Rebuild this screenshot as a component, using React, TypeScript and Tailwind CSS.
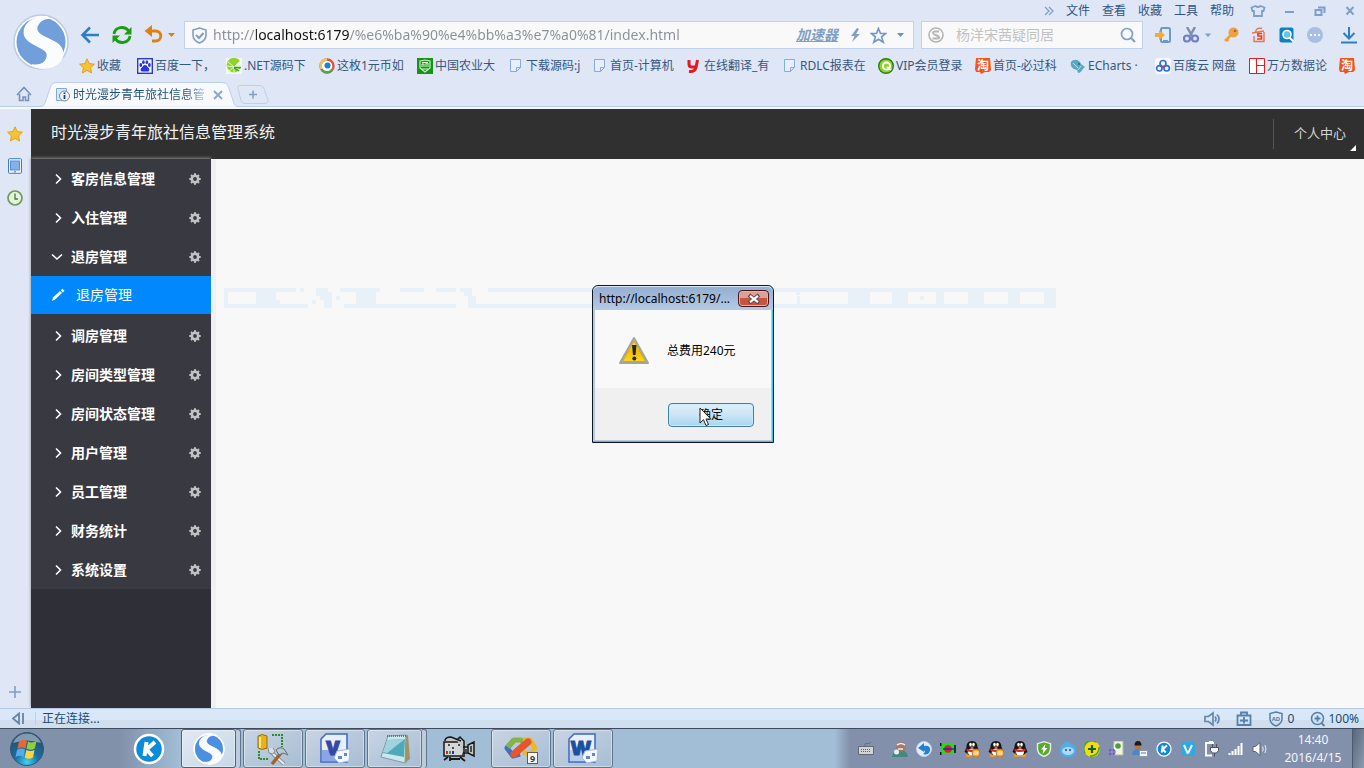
import type { ReactNode } from 'react';

const FONT = "font-['Noto_Sans','Noto_Sans_CJK_SC',sans-serif]";

const Svg = ({ size = 16, box = 16, className = '', children }: { size?: number; box?: number; className?: string; children: ReactNode }) => (
    <svg width={size} height={size} viewBox={`0 0 ${box} ${box}`} fill="none" aria-hidden="true" className={`shrink-0 ${className}`}>
        {children}
    </svg>
);

const SogouLogo = ({ size, blue = '#4a8fe2', rim = '#ffffff' }: { size: number; blue?: string; rim?: string }) => (
    <Svg size={size} box={56}>
        <circle cx="28" cy="28" r="27" fill="#fbfcfe" stroke={rim} strokeWidth="1.5" />
        <circle cx="28" cy="28" r="24.5" fill={blue} />
        <path d="M34 3C14 2 5 18 16 27C25 34 37 35 34 44C32 50 26 52 19 51L27 54C48 56 57 38 43 29C34 23 21 21 24 12C26 7 29 5 35 4Z" fill="#fbfcfe" stroke="#fbfcfe" strokeWidth="1.5" />
    </Svg>
);

const StarIcon = () => (
    <Svg>
        <path d="M8 .8l2.2 4.8 5.2.6-3.8 3.6 1 5.2L8 12.4 3.4 15l1-5.2L.6 6.2l5.2-.6z" fill="#f6c431" stroke="#e0a020" />
    </Svg>
);

const PageIcon = () => (
    <Svg>
        <path d="M2.500 1.500h10v8l-4 4h-6zM12.500 9.500h-4v4" fill="#e6effb" stroke="#82ade4" />
    </Svg>
);

const TaobaoIcon = () => (
    <Svg>
        <path d="M1 0h14l1 12-2 2h-4l-4 2-1-2H1L0 11z" fill="#f4531e" />
        <text x="8" y="11.500" fontSize="12" fontWeight="700" textAnchor="middle" fill="#fff">淘</text>
    </Svg>
);

const BaiduIcon = () => (
    <Svg>
        <rect x=".7" y=".7" width="14.600" height="14.600" fill="#f4f6ff" stroke="#2a35dc" strokeWidth="1.400" />
        <g fill="#2a35dc">
            <ellipse cx="3.800" cy="7" rx="1.400" ry="1.900" />
            <ellipse cx="6.400" cy="4.200" rx="1.300" ry="1.900" />
            <ellipse cx="9.800" cy="4.200" rx="1.300" ry="1.900" />
            <ellipse cx="12.400" cy="7" rx="1.400" ry="1.900" />
            <path d="M8 7c2 0 2 1.600 3.600 3 1.400 1.400.8 3.600-1 3.600H5.400c-1.800 0-2.400-2.200-1-3.600C6 8.600 6 7 8 7z" />
        </g>
    </Svg>
);

const NetIcon = () => (
    <Svg>
        <rect width="16" height="16" fill="#f4f8f2" />
        <path d="M14 3A7.300 7.300 0 1 0 15 9l-6 0z" fill="#8fd42c" />
        <path d="M2 4l6 5 6-6M1 8l7 1 7-2M3 13l5-4 6 3M8 9v6" stroke="#e4f6c8" />
        <path d="M8 9.500h7M8 10l5 3" stroke="#3f9c20" strokeWidth="1.400" />
    </Svg>
);

const RingIcon = () => (
    <Svg>
        <circle cx="8" cy="8" r="6.500" fill="#fff" stroke="#e8523c" strokeWidth="2.400" />
        <path d="M8 1.500A6.500 6.500 0 0 0 2.400 11" stroke="#e8c46a" strokeWidth="2.400" />
        <path d="M3 12a6.500 6.500 0 0 0 10 0" stroke="#45aa55" strokeWidth="2.400" />
        <circle cx="8.500" cy="7.500" r="3" fill="#1686c8" />
    </Svg>
);

const CauIcon = () => (
    <Svg>
        <rect width="16" height="16" fill="#149614" />
        <path d="M3 3l5-1 5 1v7l-5 4-5-4z" stroke="#c5efc0" strokeWidth="1.200" />
        <path d="M5 9V6h2v3M9 9V5h2v4M5 11h6M5 4.500h6" stroke="#d9f5d5" />
    </Svg>
);

const YoudaoIcon = () => (
    <Svg>
        <path d="M3 2v4q0 3 3 3h5M11.500 2L10 9.500Q9 14 3 13.500" stroke="#e3191f" strokeWidth="3" />
    </Svg>
);

const QiyiIcon = () => (
    <Svg>
        <circle cx="8" cy="8" r="7.300" fill="#8fd420" stroke="#2a7a20" strokeWidth="1.400" />
        <circle cx="8.500" cy="8" r="3.600" stroke="#fff" strokeWidth="2" />
        <path d="M9 9l4 3" stroke="#fff" strokeWidth="2" />
    </Svg>
);

const EchartsIcon = () => (
    <Svg>
        <path d="M1 4c3-4 9-2 10 2l4 3-3 3c-1 3-4 3-4 3l-1-3C2 11 0 8 1 4z" fill="#58a9c0" />
        <path d="M3 5l5 5M11 8l-3 4" stroke="#b9dfe8" />
        <circle cx="9" cy="6" r="1" fill="#24698a" />
    </Svg>
);

const BaiduCloudIcon = () => (
    <Svg>
        <rect width="16" height="16" rx="3" fill="#f7f9fd" />
        <circle cx="8" cy="5.500" r="3" stroke="#2b6fe0" strokeWidth="1.700" />
        <circle cx="4.300" cy="10.300" r="2.700" stroke="#2b6fe0" strokeWidth="1.700" />
        <circle cx="11.700" cy="10.300" r="2.700" stroke="#2b6fe0" strokeWidth="1.700" />
        <path d="M6.500 9.500l3-1" stroke="#e03a30" strokeWidth="1.800" />
    </Svg>
);

const WanfangIcon = () => (
    <Svg>
        <path d="M.5.5h15v15H.5zM7.500 .5v15M7.500 7.500h8" fill="#fff" stroke="#f01818" />
    </Svg>
);

const bookmarks = [
    { label: '收藏', icon: <StarIcon />, width: 'w-[58px]' },
    { label: '百度一下，', icon: <BaiduIcon />, width: 'w-[89px]' },
    { label: '.NET源码下', icon: <NetIcon />, width: 'w-[93px]' },
    { label: '这枚1元币如', icon: <RingIcon />, width: 'w-[98px]' },
    { label: '中国农业大', icon: <CauIcon />, width: 'w-[91px]' },
    { label: '下载源码:j', icon: <PageIcon />, width: 'w-[84px]' },
    { label: '首页-计算机', icon: <PageIcon />, width: 'w-[94px]' },
    { label: '在线翻译_有', icon: <YoudaoIcon />, width: 'w-[96px]' },
    { label: 'RDLC报表在', icon: <PageIcon />, width: 'w-[96px]' },
    { label: 'VIP会员登录', icon: <QiyiIcon />, width: 'w-[97px]' },
    { label: '首页-必过科', icon: <TaobaoIcon />, width: 'w-[95px]' },
    { label: 'ECharts ·', icon: <EchartsIcon />, width: 'w-[85px]' },
    { label: '百度云 网盘', icon: <BaiduCloudIcon />, width: 'w-[94px]' },
    { label: '万方数据论', icon: <WanfangIcon />, width: 'w-[90px]' },
    { label: '', icon: <TaobaoIcon />, width: 'w-4' },
];

const MenuBar = () => (
    <div className="flex h-[21px] items-center justify-end pr-2 text-xs text-[#2f5587]">
        <button aria-label="更多" className="mr-3">
            <Svg size={10} box={10}><path d="M1 1l4 4-4 4M5 1l4 4-4 4" stroke="#7f9fcb" strokeWidth="1.300" /></Svg>
        </button>
        <nav className="flex gap-3">
            {['文件', '查看', '收藏', '工具', '帮助'].map(m => <button key={m}>{m}</button>)}
        </nav>
        <div className="ml-4 flex items-center gap-4">
            <button aria-label="皮肤">
                <Svg><path d="M5.500 3L1.500 4.500 2.500 8H4v5h8V8h1.500l1-3.500L10.500 3Q8 5 5.500 3z" stroke="#7c9fcb" strokeWidth="1.800" /></Svg>
            </button>
            <button aria-label="最小化" className="ml-0.5"><Svg size={12} box={12}><path d="M1 7h9" stroke="#7c9fcb" strokeWidth="2" /></Svg></button>
            <button aria-label="还原" className="ml-0.5"><Svg size={12} box={12}><path d="M1.500 5h6v5h-6zM4 2.500h6.500V8" stroke="#7c9fcb" strokeWidth="2" /></Svg></button>
            <button aria-label="关闭" className="ml-0.5"><Svg size={12} box={12}><path d="M2.500 2l7 7.500M9.500 2l-7 7.500" stroke="#7c9fcb" strokeWidth="2" /></Svg></button>
        </div>
    </div>
);

const AddressRow = () => (
    <div className="flex h-7 items-center">
        <button aria-label="后退" className="ml-[5px]">
            <Svg size={20} box={20}><path d="M19 10H3M10 2.500L2.500 10l7.500 7.500" stroke="#2b7fc4" strokeWidth="2.600" /></Svg>
        </button>
        <button aria-label="刷新" className="ml-3">
            <Svg size={20} box={20}>
                <path d="M2 9C3 1.500 13 .5 16.500 6M18 11C17 18.500 7 19.500 3.500 14" stroke="#1f9c14" strokeWidth="2.800" />
                <path d="M19.500 2v7.500H12zM.5 18v-7.500H8z" fill="#1f9c14" />
            </Svg>
        </button>
        <button aria-label="恢复" className="ml-3 flex items-center gap-1">
            <Svg size={20} box={20}>
                <path d="M4 6h7.500c7 0 7 10 0 10H8" stroke="#e08010" strokeWidth="2.800" />
                <path d="M8 0v12L.5 6z" fill="#e08010" />
            </Svg>
            <Svg size={8} box={8}><path d="M0 2h7L3.500 6z" fill="#e08010" /></Svg>
        </button>
        <div className="ml-2 flex h-7 min-w-0 flex-1 items-center border border-[#c0d3ea] bg-[#f9f9fa] pl-1.5">
            <Svg size={17} box={17}>
                <path d="M8.500 1l6.500 2v5q0 5.500-6.500 8Q2 13.500 2 8V3z" stroke="#7f9fc6" strokeWidth="1.600" />
                <path d="M5 8l3 3 4.500-5" stroke="#7f9fc6" strokeWidth="2" />
            </Svg>
            <input
                aria-label="地址"
                defaultValue="http://localhost:6179/%e6%ba%90%e4%bb%a3%e7%a0%81/index.html"
                className="ml-[5px] min-w-0 flex-1 bg-[linear-gradient(to_right,#8a8f98_43px,#111_43px,#111_137px,#8a8f98_137px)] bg-clip-text text-sm text-transparent outline-none"
            />
            <a href="#accelerate" className="text-sm font-bold italic text-[#7f9fc6] underline">加速器</a>
            <Svg size={14} box={14} className="ml-2.5"><path d="M9 0L3 8h3.500L4 14l8-8H8l3-5z" fill="#7f9fc6" /></Svg>
            <Svg size={17} box={17} className="ml-2"><path d="M8.500 1.500l2 5h5.300l-4.200 3.400 1.600 5.300-4.700-3-4.700 3 1.600-5.300L1.200 6.500h5.300z" stroke="#7399c8" strokeWidth="1.700" /></Svg>
            <Svg size={8} box={8} className="ml-2.5 mr-2"><path d="M0 2h7L3.500 6z" fill="#6c92c4" /></Svg>
        </div>
        <div className="ml-[7px] flex h-7 w-[222px] items-center border border-[#c0d3ea] bg-[#f9f9fa] px-1.5">
            <Svg size={16}>
                <circle cx="8" cy="8" r="7" stroke="#b5b5b5" strokeWidth="1.600" />
                <path d="M11 4.500H7Q4.800 4.500 5 6T7.500 8 11 10 9 11.500H4.500" stroke="#b5b5b5" strokeWidth="1.800" />
            </Svg>
            <input aria-label="搜索" placeholder="杨洋宋茜疑同居" className="ml-3 min-w-0 flex-1 text-sm outline-none placeholder:text-[#c2c2c2]" />
            <Svg size={16}><circle cx="7" cy="7" r="5.500" stroke="#7f9fc6" strokeWidth="1.700" /><path d="M11 11l4 4" stroke="#7f9fc6" strokeWidth="2" /></Svg>
        </div>
        <div className="flex w-[221px] items-center pl-3">
            <button aria-label="手机"><Svg><rect x="6" y="1" width="9" height="14" rx="1.500" fill="#dcebfb" stroke="#6c98cc" strokeWidth="2" /><path d="M8 14h5" stroke="#6c98cc" strokeWidth="2" /><path d="M0 6h4V3l6 5-6 5v-3H0z" fill="#f4ab36" /></Svg></button>
            <button aria-label="截图" className="ml-3 flex items-center gap-1.5">
                <Svg><path d="M4 0l5 9M12 0L7 9" stroke="#7d8ea8" strokeWidth="2.400" /><circle cx="4" cy="11.500" r="3" stroke="#6f7fc8" strokeWidth="2.200" /><circle cx="12" cy="11.500" r="3" stroke="#6f7fc8" strokeWidth="2.200" /></Svg>
                <Svg size={6} box={8}><path d="M0 2h8L4 7z" fill="#7f9fc6" /></Svg>
            </button>
            <button aria-label="密码" className="ml-3"><Svg><circle cx="10.500" cy="5.500" r="5" fill="#f0a03c" /><path d="M8 8l-6 6M3 11.500l2.500 2.500" stroke="#f0a03c" strokeWidth="2.800" /><circle cx="12" cy="4" r="1.300" fill="#a9672b" /></Svg></button>
            <button aria-label="购物" className="ml-3"><Svg><path d="M1 6l12-2M3 9v5.500h10V5M4.500 4.500Q6 0 11 1.500" stroke="#f0704a" strokeWidth="1.400" /><path d="M11 6.500H7v2.500h3.500v3H6" stroke="#f03c20" strokeWidth="1.700" /></Svg></button>
            <button aria-label="查词" className="ml-3"><Svg><rect x=".5" y=".5" width="14" height="15" rx="2" fill="#0f80c0" /><circle cx="8" cy="7.500" r="4" fill="#61c5ee" stroke="#fff" strokeWidth="1.600" /><path d="M10.500 10.500l4 4" stroke="#fff" strokeWidth="2" /></Svg></button>
            <button aria-label="扩展" className="ml-3"><Svg><circle cx="8" cy="8" r="8" fill="#a9bfe2" /><path d="M3 8h2M7 8h2M11 8h2" stroke="#f3f7fd" strokeWidth="2" /></Svg></button>
            <button aria-label="下载" className="ml-[17px]"><Svg size={18} box={18}><path d="M9 1v11M3.500 7L9 12.500 14.500 7M1 16.500h16" stroke="#2b7fc4" strokeWidth="2" /></Svg></button>
        </div>
    </div>
);

const TabRow = () => (
    <div className="flex h-[27px] items-end border-b-2 border-[#f8f9fc]">
        <div className="flex h-full w-[41px] items-center border-b border-[#b9cce8] pl-4">
            <button aria-label="主页"><Svg><path d="M1 9l7-7.500L15 9M3.500 8v6.500H7V11h2.500v3.500h3V8" stroke="#7493be" strokeWidth="1.600" /></Svg></button>
        </div>
        <div className="relative flex h-full w-[196px] items-center pl-[14px]">
            <svg viewBox="0 0 196 27" preserveAspectRatio="none" className="absolute inset-0 size-full" aria-hidden="true">
                <path d="M0 26.500Q3 26 4 23L10 4Q11 .5 15 .5H181Q185 .5 187 4L193 23Q194 26 196 26.500" fill="#f8f9fc" stroke="#b9cce8" />
            </svg>
            <Svg className="relative">
                <path d="M1.500 1.500h10v12h-10z" fill="#d9e8f9" stroke="#7eaae0" />
                <circle cx="9.500" cy="9" r="5" fill="#eef3f9" stroke="#78889c" />
                <path d="M9.500 5.500v1.500M9.500 8v4" stroke="#233f80" strokeWidth="1.800" />
            </Svg>
            <span className="relative ml-0.5 w-[132px] overflow-hidden whitespace-nowrap bg-[linear-gradient(to_right,#1d4d79_85%,#c5d2df)] bg-clip-text text-xs text-transparent">时光漫步青年旅社信息管</span>
            <button aria-label="关闭标签" className="relative ml-2"><Svg size={10} box={10}><path d="M1 1l8 8M9 1L1 9" stroke="#86a6cf" strokeWidth="1.800" /></Svg></button>
        </div>
        <div className="h-full flex-1 border-b border-[#b9cce8] pt-[3px]">
            <button aria-label="新标签">
                <svg width="32" height="19" viewBox="0 0 32 19" fill="none" aria-hidden="true">
                    <path d="M3 .5h20q3 0 4 3l4 12q0 3-3 3H8q-3 0-4-3L1 3.500q-1-3 2-3z" stroke="#c0cfe5" />
                    <path d="M12 9.500h8M16 5.500v8" stroke="#7f9fc6" strokeWidth="1.500" />
                </svg>
            </button>
        </div>
    </div>
);

const BrowserHeader = () => (
    <header className="bg-[#dfe6f6]">
        <div className="flex">
            <div className="w-[75px] shrink-0 pl-[13px] pt-[14px]"><SogouLogo size={56} blue="#719fdc" rim="#b9cbe6" /></div>
            <div className="min-w-0 flex-1">
                <MenuBar />
                <AddressRow />
                <nav className="flex h-[33px] items-center overflow-hidden whitespace-nowrap pl-1 text-xs text-[#36587f]">
                    {bookmarks.map((b, i) => (
                        <a key={i} href="#bookmark" aria-label={b.label || '淘宝'} className={`flex shrink-0 items-center gap-0.5 ${b.width}`}>
                            {b.icon}{b.label}
                        </a>
                    ))}
                </nav>
            </div>
        </div>
        <TabRow />
    </header>
);

const SideRail = () => (
    <aside className="flex w-[31px] shrink-0 flex-col items-center gap-4 bg-[#dfe6f6] pb-2 pr-0.5 pt-[17px]">
        <button aria-label="收藏夹"><StarIcon /></button>
        <button aria-label="手机助手"><Svg><rect x="1.500" y=".7" width="13" height="14.600" rx="1" fill="#f0f6fd" stroke="#3b7cc4" /><rect x="3.500" y="3" width="9" height="9" fill="#84b2e8" stroke="#5790d2" /><path d="M7 13.800h2" stroke="#3b7cc4" /></Svg></button>
        <button aria-label="历史"><Svg><circle cx="8" cy="8" r="7" fill="#e6f1df" stroke="#6a9e58" strokeWidth="1.700" /><path d="M8 3.500V9h3" stroke="#3f8130" strokeWidth="1.300" /></Svg></button>
        <button aria-label="添加" className="mt-auto"><Svg><path d="M2 8h12M8 2v12" stroke="#7f9fc6" strokeWidth="1.600" /></Svg></button>
    </aside>
);

const menu = [
    { label: '客房信息管理' },
    { label: '入住管理' },
    { label: '退房管理', child: '退房管理' },
    { label: '调房管理' },
    { label: '房间类型管理' },
    { label: '房间状态管理' },
    { label: '用户管理' },
    { label: '员工管理' },
    { label: '财务统计' },
    { label: '系统设置' },
];

const GearIcon = () => (
    <Svg size={12} box={12}>
        <circle cx="6" cy="6" r="3.200" stroke="#c2c2c6" strokeWidth="2.600" />
        <path d="M6 .3v1.700M6 10v1.700M.3 6H2M10 6h1.700M2 2l1.200 1.200M8.800 8.800L10 10M10 2L8.800 3.200M3.200 8.800L2 10" stroke="#c2c2c6" strokeWidth="2" />
    </Svg>
);

const Sidebar = () => (
    <nav className="w-[180px] shrink-0 bg-[#2f2f38] text-sm text-white shadow-[0_-1px_3px_#8a8a8a]">
        <ul className="bg-[#393941]">
            {menu.map(m => (
                <li key={m.label}>
                    <button className="flex h-[39px] w-full items-center pl-5 pr-[10px] font-bold">
                        <Svg size={12} box={12} className={m.child ? '' : 'pl-0'}>
                            <path d={m.child ? 'M1 3.500L6 8l5-4.500' : 'M5 1.500L9.500 6 5 10.500'} stroke="#fff" strokeWidth="1.600" />
                        </Svg>
                        <span className="ml-2 flex-1 text-left">{m.label}</span>
                        <GearIcon />
                    </button>
                    {m.child && (
                        <a href="#checkout" className="mb-0.5 flex h-[38px] items-center bg-[#0088fc] pl-5">
                            <Svg size={14} box={14}>
                                <path d="M1 13l1-3.500L9 3l2 2-7 6.500z" fill="#fff" />
                                <path d="M9.800 2.200L11.500.8l2 2-1.600 1.600z" fill="#fff" />
                            </Svg>
                            <span className="ml-[11px]">{m.child}</span>
                        </a>
                    )}
                </li>
            ))}
        </ul>
    </nav>
);

// Faint strip left behind by the table header while the page reloads
const HeaderStrip = () => (
    <svg width="832" height="20" viewBox="0 0 832 20" fill="#e8f0f8" shapeRendering="crispEdges" aria-hidden="true" className="max-w-full">
        <path d="M0 0h72v4H0zM76 0h4v4h-4zM0 4h4v12H0zM0 16h84v4H0zM32 4h20v8h4v4H32zM88 12h4v4h-4zM92 0h12v4h4v16h-8v-8h-4V8h-4zM116 0h40v4h-4v12H132V4h-16zM112 8h4v4h-4zM176 0h24v4h-24zM212 0h20v4h-20zM120 16h112v4H120zM236 0h12v8h4v8h272v4H244v-12h-4V4h-4zM264 0h568v4H264zM512 16h320v4H512z" />
        <path d="M572 4h4v3h-4zM573 8h3v8h-3zM624 4h22v12h-22zM668 4h16v12h-16zM696 8h4v4h-4zM712 4h8v12h-8zM744 4h16v12h-16zM784 4h12v12h-12zM820 4h12v12h-12z" />
    </svg>
);

const HotelApp = () => (
    <div className="flex min-w-0 flex-1 flex-col">
        <header className="flex h-[50px] items-center bg-[#303030] pl-5 text-white">
            <h1 className="flex-1 pb-1 text-base text-[#f2f2f2]">时光漫步青年旅社信息管理系统</h1>
            <button className="relative flex h-[30px] items-center border-l border-[#4c5855] pl-5 pr-[18px] text-[13px] text-[#d6d6d6]">
                个人中心
                <span className="absolute -bottom-0.5 right-2 border-b-[6px] border-l-[6px] border-b-white border-l-transparent" />
            </button>
        </header>
        <div className="flex flex-1">
            <Sidebar />
            <main className="min-w-0 flex-1 border-l-[5px] border-[#f0f0f3] bg-[#f8f8f8] pl-2 pt-[129px]">
                <HeaderStrip />
            </main>
        </div>
    </div>
);

const AlertDialog = () => (
    <div role="dialog" aria-labelledby="alert-title" className="absolute left-[592px] top-[285px] w-[182px] rounded-t-md border border-[#111820] bg-[#b4cbe5] text-xs text-black shadow-[inset_-1px_-1px_0_#36c5ee]">
        <div className="flex h-6 items-center rounded-t-md border-t border-[#dce8f5] bg-linear-to-b from-[#95afd1] to-[#b4cae5] pl-1.5 pr-1">
            <span id="alert-title" className="min-w-0 flex-1 whitespace-nowrap">http://localhost:6179/...</span>
            <button aria-label="关闭" className="flex h-[17px] w-[31px] items-center justify-center rounded-sm border border-[#4b1420] bg-linear-to-b from-[#dda093] from-50% to-[#c65540] to-50% shadow-[inset_0_0_0_1px_#e7b0a5]">
                <Svg size={14} box={14}>
                    <path d="M2 3l10 8M12 3L2 11" stroke="#5e4850" strokeWidth="4" />
                    <path d="M3 3.800l8 6.400M11 3.800l-8 6.400" stroke="#fff" strokeWidth="2.200" />
                </Svg>
            </button>
        </div>
        <div className="mx-0.5 mb-0.5 bg-[#f9f9f9]">
            <div className="flex h-[78px] items-center gap-[17px] pl-[23px] pt-1">
                <Svg size={32} box={32}>
                    <defs>
                        <linearGradient id="warn" x1="0" y1="0" x2="0" y2="1"><stop stopColor="#ffec40" /><stop offset=".5" stopColor="#f6bb08" /><stop offset="1" stopColor="#ffd815" /></linearGradient>
                    </defs>
                    <path d="M16 3L30 28H2z" fill="#d3d4cc" stroke="#a3a49c" strokeWidth="2" strokeLinejoin="round" />
                    <path d="M16 6l11.500 20.500h-23z" fill="url(#warn)" stroke="#d9a30c" />
                    <path d="M14 10h4.500l-1 10h-2.500z" fill="#242424" />
                    <circle cx="16.300" cy="23.500" r="2" fill="#242424" />
                </Svg>
                <p>总费用240元</p>
            </div>
            <div className="relative flex h-[52px] justify-end bg-[#f0f0f0] pr-[17px] pt-[15px]">
                <button className="h-6 w-[86px] rounded-sm border border-[#3c7fb1] bg-linear-to-b from-[#e0eff8] via-[#cbe5f5] to-[#a8d5ef] shadow-[inset_0_0_0_1px_#c9ecfa]">确定</button>
                <svg width="13" height="20" viewBox="0 0 13 20" aria-hidden="true" className="absolute left-[104px] top-[19px]">
                    <path d="M1 1v15l3.500-3.300L7 18.500l2.500-1L7 12h4.800z" fill="#fff" stroke="#222" />
                </svg>
            </div>
        </div>
    </div>
);

const StatusBar = () => (
    <div className="flex h-5 items-center border-t border-[#b7c8e4] bg-linear-to-b from-[#d9e8f8] from-60% to-[#d0deed] to-60% text-xs text-[#174b76]">
        <button aria-label="收起" className="flex w-9 justify-center border-r border-[#c0d0e4]"><Svg size={13} box={13}><path d="M8 1.500v10L2 6.500zM12 1v11" stroke="#6684a3" strokeWidth="1.800" /></Svg></button>
        <span className="ml-1.5 flex-1">正在连接...</span>
        <div className="flex items-center gap-4 pr-[5px]">
            <button aria-label="静音"><Svg><path d="M1 5.500h3.500L9 2v12l-4.500-3.500H1zM11 5.500q2 2.500 0 5M13 3.500q4 4.500 0 9" stroke="#6189ae" strokeWidth="1.700" /></Svg></button>
            <button aria-label="工具箱"><Svg><path d="M5 4V1.500h6V4M1.500 4.500h13v9.500h-13zM4 9.500h8M8 6v6.500" stroke="#5580a8" strokeWidth="1.800" /></Svg></button>
            <button className="flex items-center gap-1">
                <Svg><path d="M8 1l6 1.500V8q0 4.500-6 7-6-2.500-6-7V2.500z" stroke="#5580a8" strokeWidth="1.500" /><text x="8" y="10" fontSize="6" fontWeight="700" textAnchor="middle" fill="#5580a8">AD</text></Svg>
                0
            </button>
            <button className="flex items-center gap-0.5">
                <Svg><circle cx="7.500" cy="7.500" r="6" stroke="#5580a8" strokeWidth="1.600" /><path d="M4.500 7.500h6M7.500 4.500v6M11.500 12l3 3" stroke="#5580a8" strokeWidth="1.800" /></Svg>
                100%
            </button>
        </div>
    </div>
);

const StartOrb = () => (
    <Svg size={36} box={36}>
        <defs>
            <radialGradient id="orb" cx=".5" cy=".9" r=".9"><stop stopColor="#3fd4f4" /><stop offset=".4" stopColor="#1a6ea0" /><stop offset="1" stopColor="#2c4a66" /></radialGradient>
        </defs>
        <circle cx="18" cy="18" r="16.500" fill="url(#orb)" stroke="#3a5878" />
        <path d="M4 12Q8 2.500 18 2.500T32 12q-14-5-28 0z" fill="#b9cddd" opacity=".6" />
        <path d="M10 10.500q4-3 8-.5l-1.500 7.500q-4-2-8 .5z" fill="#ee6530" />
        <path d="M19 10.500q4 2 8.500-.5l-1.700 7.500q-4.300 2.500-8.300 0z" fill="#8fce3c" />
        <path d="M8 19q4-2.500 8-.5L14.500 26q-4-2.500-8 .3z" fill="#5ba9ec" />
        <path d="M17.300 19q4 2 8.200 0L24 26.500q-4 2.500-8.200 0z" fill="#fbd43e" />
    </Svg>
);

const KIcon = ({ size }: { size: number }) => (
    <Svg size={size} box={32}>
        <circle cx="16" cy="16" r="14" fill="#0c8bd6" stroke="#fff" strokeWidth="2.500" />
        <path d="M13.500 9L11.500 23M22 9l-8.500 7.500L19.500 23" stroke="#fff" strokeWidth="4" />
    </Svg>
);

const ToolsIcon = () => (
    <Svg size={32} box={32}>
        <path d="M1 3q4-3 9 0v12q-5 3-9 0z" fill="#e9b21c" stroke="#9a6b0c" />
        <path d="M3 4v11" stroke="#ffe790" strokeWidth="2" />
        <path d="M15 2h10v12M2 18v8h10" stroke="#2d8a26" strokeWidth="2" strokeDasharray="2 1" />
        <path d="M14 19l13 12" stroke="#89949e" strokeWidth="4" />
        <path d="M14 19l13 12" stroke="#e5ebf0" strokeWidth="2" />
        <path d="M15 31l9-11" stroke="#a0642a" strokeWidth="3.500" />
        <path d="M19 17q4-4 8-1l4 6-5-2-4 2z" fill="#bfc7ce" stroke="#626e7c" />
        <path d="M11 15l1 5 4 1 2-3-2-3" fill="#d9e0e7" stroke="#7f8b98" />
    </Svg>
);

const OfficeIcon = ({ kind }: { kind: 'V' | 'W' }) => (
    <Svg size={32} box={32}>
        <path d="M7 1h21v28H2V6z" fill="#e9eff9" stroke="#3d67be" strokeWidth="1.500" />
        <path d="M3 17h24v11H3z" fill={kind === 'V' ? '#8ba6e4' : '#b7cbed'} />
        <text x="14" y="22" fontSize="20" fontWeight="900" textAnchor="middle" fill={kind === 'V' ? '#3449a4' : '#1c4f9e'} stroke={kind === 'V' ? '#3449a4' : '#1c4f9e'}>{kind}</text>
        <path d="M18 18l13-2-1 12-10 2-5-5z" fill="#f4f7fc" stroke="#a7b9dc" />
        <path d="M19 23h4v3h-4zM25 20h3v3h-3z" fill="#6486ce" />
    </Svg>
);

const NotepadIcon = () => (
    <Svg size={32} box={32}>
        <path d="M10 4l19-2 2 24-5 4z" fill="#a89160" />
        <path d="M9 3l18-1-1 28L2 24z" fill="#cde8ec" stroke="#769da5" />
        <path d="M9 7l17-1-1 18L4 20z" fill="#50a9b8" />
        <path d="M9 7l17-1-18 14-4-1z" fill="#9fd4dc" />
        <path d="M8 3h20" stroke="#52636a" strokeWidth="1.500" strokeDasharray="1 1" />
    </Svg>
);

const CameraIcon = () => (
    <Svg size={34} box={34}>
        <path d="M2 10h19v14H2z" fill="#d4d7d7" stroke="#181818" strokeWidth="1.500" />
        <path d="M3 9q0-4 6-4l10 4M15 8l3-3 4 4v16M21 15h5v6h-5M26 13l6-3v14l-6-3z" fill="#c5c8c8" stroke="#181818" strokeWidth="1.500" />
        <path d="M6 25l-4 3M8 25v4M18 25l5 4M8 27h10" stroke="#181818" strokeWidth="1.800" />
        <path d="M6 13h2M10 16h2M16 13h2M24 17v3M29 14v6" stroke="#222" strokeWidth="1.500" />
        <path d="M4 19h2v3H4z" fill="#e22020" /><path d="M7 19h2v3H7z" fill="#20b020" /><path d="M10 19h2v3h-2z" fill="#2030e0" />
    </Svg>
);

const StudioIcon = () => (
    <Svg size={34} box={34}>
        <path d="M10 8L3 16l6 8 7-2" stroke="#3d72bd" strokeWidth="5" strokeLinejoin="round" />
        <path d="M3.500 15L10 8h7l4 5" stroke="#86b544" strokeWidth="5" strokeLinejoin="round" />
        <path d="M19 8h7l5 8-5 7-7-3" stroke="#e9ba28" strokeWidth="5" strokeLinejoin="round" />
        <path d="M10 22L24 10" stroke="#e45530" strokeWidth="7" strokeLinecap="round" />
        <rect x="23.500" y="20.500" width="10" height="11" fill="#f8f8f8" stroke="#65584c" />
        <text x="28.500" y="29.500" fontSize="9" fontWeight="700" textAnchor="middle" fill="#3c3c3c">9</text>
    </Svg>
);

const Qq = ({ badge }: { badge?: boolean }) => (
    <Svg>
        <ellipse cx="4.500" cy="14.500" rx="3" ry="1.500" fill="#f09a22" />
        <ellipse cx="11.500" cy="14.500" rx="3" ry="1.500" fill="#f09a22" />
        <path d="M8 0c4 0 5.500 3 5.500 6l2 5-2 1c-1 3-10 3-11 0l-2-1 2-5C2.500 3 4 0 8 0z" fill="#171717" />
        <ellipse cx="8" cy="11" rx="4" ry="3.500" fill="#fff" />
        <ellipse cx="6.500" cy="3.500" rx="1.300" ry="1.800" fill="#fff" /><ellipse cx="9.500" cy="3.500" rx="1.300" ry="1.800" fill="#fff" />
        <path d="M5 5.500h6L8 7z" fill="#f3a31d" />
        <path d="M2.500 7.500q5.500 2.500 11 0v2.500Q8 12 2.500 10zM4 9.500V13H2.500" fill="#e02420" />
        {badge && <><circle cx="12" cy="12" r="4" fill="#f4a832" stroke="#b86a10" strokeWidth=".7" /><path d="M9.500 11h5M9.500 13h5" stroke="#fff" /></>}
    </Svg>
);

const trayIcons = [
    { name: '助手', icon: <Svg><path d="M0 16q1-7 8-7t8 7z" fill="#42887c" /><circle cx="9" cy="5.500" r="5" fill="#a37a6b" /><path d="M5 4q4-3 8 0M6 8h5" stroke="#f0ece8" strokeWidth="1.600" /><circle cx="4.500" cy="11" r="2.500" fill="#eee" /></Svg> },
    { name: '同步', icon: <Svg><circle cx="8" cy="8" r="7.500" fill="#e2effb" stroke="#b8d4ee" /><path d="M2 7l6-5v3q7-1 6 5-2 5-7 3 3-2 1-4v2z" fill="#287fd2" /></Svg> },
    { name: '录像', icon: <Svg><path d="M1 3h13v10H1z" fill="#14e614" /><path d="M.7 2v3M.7 11v3M15 4v8" stroke="#111" strokeWidth="1.500" /><circle cx="8" cy="8" r="3.800" fill="#ee1525" /><path d="M3 8h11" stroke="#2020e0" strokeWidth="1.500" /></Svg> },
    { name: 'QQ', icon: <Qq badge /> },
    { name: 'QQ', icon: <Qq badge /> },
    { name: 'QQ', icon: <Qq /> },
    { name: '安全卫士', icon: <Svg><path d="M8 .7l6.500 2V8q0 5-6.500 7.500Q1.500 13 1.500 8V2.700z" fill="#57a930" stroke="#e7f1df" strokeWidth="1.400" /><path d="M9.500 3L5 8.500h2.500L6.500 13l5-6H8.700z" fill="#fff" /></Svg> },
    { name: '旺旺', icon: <Svg><path d="M3 3q3-4 6-2l4 3q3 2 3 6-1 6-8 6T0 10q0-5 3-7z" fill="#4daeea" /><ellipse cx="8" cy="10" rx="6" ry="4" fill="#a9dcf8" /><path d="M6 8v2M10 8v2" stroke="#1a4d7c" strokeWidth="1.500" /></Svg> },
    { name: '加速球', icon: <Svg><circle cx="8" cy="8" r="8" fill="#f1dc17" /><path d="M1 12A8 8 0 0 1 12 1M15 6a8 8 0 0 1-9 9" stroke="#51a528" strokeWidth="1.600" /><path d="M4 8h8M8 4v8" stroke="#175f1a" strokeWidth="2.200" /></Svg> },
    { name: '文档', icon: <Svg><path d="M6 0h9v14H5z" fill="#f4f4dc" stroke="#b7b79a" /><circle cx="10" cy="5" r="2.800" fill="#4c9b50" /><circle cx="4" cy="11" r="3.500" fill="#6763b2" /><path d="M0 11h8M4 7v8" stroke="#9d9adc" /></Svg> },
    { name: '用户', icon: <Svg><path d="M0 14q0-6 6-6t6 6z" fill="#4f83ca" /><circle cx="6" cy="5" r="3.300" fill="#b8794a" /><path d="M2.500 4.500q0-4.500 3.500-4.500t3.500 4.500z" fill="#1f1a18" /><path d="M7.500 9.500h8v6h-8z" fill="#f4f6f8" stroke="#8898a8" /><path d="M9 12h5" stroke="#5078b0" /></Svg> },
    { name: '酷狗', icon: <KIcon size={16} /> },
    { name: 'V', icon: <Svg><rect x="1" y="1" width="14" height="14" rx="3" fill="#31a9de" /><path d="M4 4l3.500 8 1-.5L12 4" stroke="#e4f7ff" strokeWidth="2" /></Svg> },
    { name: '电源', icon: <Svg><path d="M10 2H2v12.500h6M5 1h4" stroke="#fff" strokeWidth="1.800" /><path d="M8.500 6V3M12.500 6V3M6.500 6.500h8v3l-2 2.500h-4l-2-2.500zM10.500 12v3.500" fill="#f4f6fa" stroke="#4a5260" /></Svg> },
    { name: '网络', icon: <Svg><path d="M1.500 14v-2M4.500 14v-4M7.500 14V8M10.500 14V5M13.500 14V2" stroke="#fff" strokeWidth="2" /></Svg> },
    { name: '音量', icon: <Svg><path d="M1 5.500h2.500L8 1.500v13l-4.500-4H1z" fill="#fff" stroke="#59657a" /><path d="M10.500 5.500q1.500 2.500 0 5M13 4q2 4 0 8" stroke="#e8edf5" /></Svg> },
];

const GLASS = 'border-[#60758c] bg-linear-to-br from-[#c8d4e4] to-[#a7bdd4] shadow-[inset_0_0_0_1px_#ffffff66]';

const tasks = [
    { name: '搜狗浏览器', icon: <SogouLogo size={32} />, look: 'border-[#4d6177] bg-linear-to-br from-[#e3e9f2] to-[#c7d7e9] shadow-[inset_0_0_0_1px_#ffffff66]', stacked: true },
    { name: '数据库工具', icon: <ToolsIcon />, look: GLASS },
    { name: 'Visio', icon: <OfficeIcon kind="V" />, look: GLASS },
    { name: '记事本', icon: <NotepadIcon />, look: GLASS, stacked: true },
    { name: '录像机', icon: <CameraIcon />, look: 'border-transparent' },
    { name: 'Visual Studio', icon: <StudioIcon />, look: GLASS },
    { name: 'Word', icon: <OfficeIcon kind="W" />, look: GLASS },
];

const Taskbar = () => (
    <footer className="flex h-10 items-center border-t border-[#3d4b61] bg-[linear-gradient(to_right,#8191aa_120px,#a2bdd6_180px,#a2bdd6_835px,#8290ab_850px)]">
        <button aria-label="开始" className="ml-[9px]"><StartOrb /></button>
        <button aria-label="酷狗音乐" className="ml-[88px]"><KIcon size={32} /></button>
        <div className="ml-4 flex h-full gap-0.5">
            {tasks.map(t => (
                <div key={t.name} className="flex h-full w-[60px]">
                    <button aria-label={t.name} className={`flex h-full flex-1 items-center justify-center rounded-[3px] border ${t.look}`}>{t.icon}</button>
                    {t.stacked && <span className="w-[5px] rounded-r-[3px] border-r border-t border-[#60758c] bg-[#bccbdd]" />}
                </div>
            ))}
        </div>
        <div className="ml-auto flex items-center gap-2">
            <button aria-label="输入法" className="mr-2.5"><Svg><path d="M.5 5.500h15v8H.5z" fill="#d2d4d6" stroke="#606a76" /><path d="M3 8.500h10M3 10.500h10" stroke="#586069" strokeDasharray="1 1" /><path d="M7 5q-1-3 2-2.500t4-1.500" stroke="#676d76" /></Svg></button>
            {trayIcons.map((t, i) => <button key={i} aria-label={t.name}>{t.icon}</button>)}
        </div>
        <time className="ml-2 w-[74px] text-center text-xs leading-[18px] text-[#f4f6fa]">14:40<br />2016/4/15</time>
        <button aria-label="显示桌面" className="ml-0.5 h-full w-3 border-l border-[#4b5a70] bg-linear-to-br from-[#59667a] to-[#8d9bb1]" />
    </footer>
);

export default function App() {
    return (
        <div className={`relative flex min-h-screen flex-col overflow-hidden bg-[#f8f8f8] ${FONT}`}>
            <BrowserHeader />
            <div className="flex flex-1">
                <SideRail />
                <HotelApp />
            </div>
            <StatusBar />
            <Taskbar />
            <AlertDialog />
        </div>
    );
}
